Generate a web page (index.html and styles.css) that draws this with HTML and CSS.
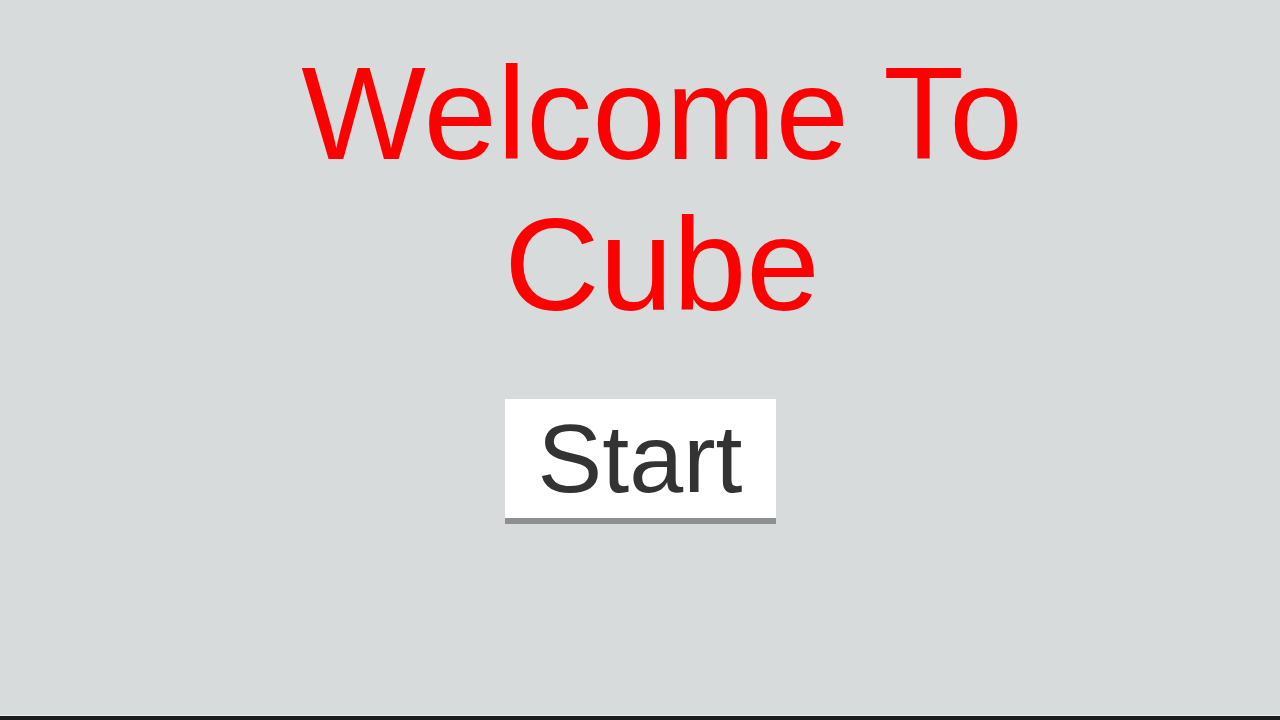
FILE: index.html
```html
<!DOCTYPE html>
<html lang="en">
<head>
<meta charset="utf-8">
<title>Welcome To Cube</title>
<link rel="stylesheet" href="styles.css">
</head>
<body>
<main class="page">
  <h1 class="title">Welcome To<br>Cube</h1>
  <button class="start-btn" type="button">Start</button>
</main>
</body>
</html>
```
FILE: styles.css
```css
html {
  background: #1c1c1c;
}
body {
  margin: 0;
  font-family: "Liberation Sans", Arial, sans-serif;
}
.page {
  box-sizing: border-box;
  height: 716px;
  background: #d8dbdc;
  border-bottom: 1px solid #ebebeb;
  display: flex;
  flex-direction: column;
  align-items: center;
  padding-top: 38px;
}
.title {
  margin: 0;
  padding-left: 44px;
  font-size: 132px;
  font-weight: normal;
  line-height: normal;
  color: #ff0000;
  text-align: center;
}
.start-btn {
  margin-top: 59px;
  box-sizing: border-box;
  width: 271px;
  height: 125px;
  padding: 4px 0 0;
  border: none;
  border-bottom: 6px solid #8f8f8f;
  background: #ffffff;
  color: #333333;
  font-family: "Liberation Sans", Arial, sans-serif;
  font-size: 97px;
  line-height: normal;
  display: flex;
  justify-content: center;
  align-items: flex-start;
}
```
